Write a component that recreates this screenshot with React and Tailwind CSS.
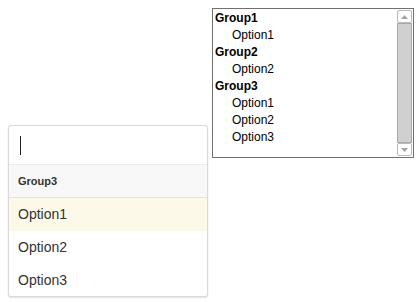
import React from "react";

function Listbox() {
  const rows = [
    ["g", "Group1"],
    ["o", "Option1"],
    ["g", "Group2"],
    ["o", "Option2"],
    ["g", "Group3"],
    ["o", "Option1"],
    ["o", "Option2"],
    ["o", "Option3"],
  ];
  return (
    <div className="mt-[8px] ml-[4px] flex h-[150px] w-[202px] border border-[#6f6f6f] bg-white">
      <div className="flex-1 pl-[2px] pt-[1px] text-[12px] text-black" style={{ fontFamily: "'Liberation Sans', Arial, sans-serif" }}>
        {rows.map(([t, label], i) => (
          <div
            key={i}
            className={
              t === "g"
                ? "h-[17px] leading-[17px] font-bold"
                : "h-[17px] leading-[17px] pl-[17px]"
            }
          >
            {label}
          </div>
        ))}
      </div>
      <div className="my-[1px] mr-[1px] flex w-[15px] flex-col">
        <div className="flex h-[13px] items-center justify-center rounded-[2px] border border-[#b9b9b9] bg-white">
          <svg width="7" height="4" viewBox="0 0 7 4">
            <polygon points="0,4 7,4 3.5,0" fill="#a3a3a3" />
          </svg>
        </div>
        <div className="flex-1 border border-[#a9a9a9] bg-[#d0d0d0]" />
        <div className="flex h-[13px] items-center justify-center rounded-[2px] border border-[#b9b9b9] bg-white">
          <svg width="7" height="4" viewBox="0 0 7 4">
            <polygon points="0,0 7,0 3.5,4" fill="#a3a3a3" />
          </svg>
        </div>
      </div>
    </div>
  );
}

function Dropdown() {
  return (
    <div
      className="mt-[125px] ml-[8px] w-[200px] overflow-hidden rounded-[3px] border border-[#d9d9d9] bg-white shadow-[0_1px_2px_rgba(0,0,0,0.12)]"
      style={{ fontFamily: "'Liberation Sans', Arial, sans-serif" }}
    >
      <div className="flex h-[39px] items-center border-b border-[#ececec] pl-[11px]">
        <div className="h-[19px] w-[1px] bg-[#222]" />
      </div>
      <div className="flex h-[33px] items-center border-b border-[#e3e3e3] bg-[#f8f8f8] pl-[9px] text-[11px] font-bold text-[#333]">
        Group3
      </div>
      <div className="flex h-[33px] items-center bg-[#fdf9e9] pl-[9px] text-[14px] text-[#333]">
        Option1
      </div>
      <div className="flex h-[33px] items-center pl-[9px] text-[14px] text-[#333]">
        Option2
      </div>
      <div className="flex h-[32px] items-center pl-[9px] text-[14px] text-[#333]">
        Option3
      </div>
    </div>
  );
}

export default function App() {
  return (
    <div className="flex h-[302px] w-[420px] items-start bg-white">
      <Dropdown />
      <Listbox />
    </div>
  );
}
